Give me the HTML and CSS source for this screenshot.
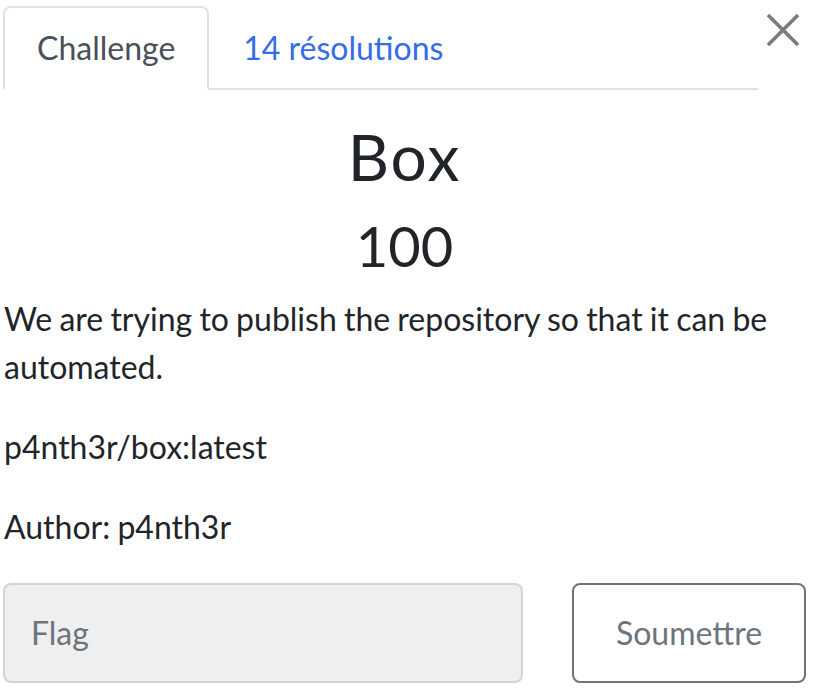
FILE: index.html
```html
<!DOCTYPE html>
<html lang="fr">
<head>
<meta charset="utf-8">
<title>Box</title>
<link rel="stylesheet" href="styles.css">
</head>
<body>
<div class="modal">
  <div class="header">
    <ul class="tabs">
      <li class="tab active">Challenge</li>
      <li class="tab link">14 résolutions</li>
    </ul>
    <button class="close" aria-label="Close">
      <svg width="34" height="34" viewBox="0 0 34 34"><path d="M2 2 L32 32 M32 2 L2 32" stroke="#7b7b7b" stroke-width="3.6" stroke-linecap="butt" fill="none"/></svg>
    </button>
  </div>
  <h2 class="name">Box</h2>
  <h3 class="value">100</h3>
  <div class="desc">
    <p>We are trying to publish the repository so that it can be automated.</p>
    <p>p4nth3r/box:latest</p>
    <p>Author: p4nth3r</p>
  </div>
  <form class="submit">
    <input class="flag" type="text" placeholder="Flag">
    <button type="button" class="btn">Soumettre</button>
  </form>
</div>
</body>
</html>
```
FILE: styles.css
```css
* { box-sizing: border-box; }
html, body { margin: 0; padding: 0; background: #fff; }
body {
  font-family: Lato, "Open Sans", sans-serif;
  color: #212529;
  font-size: 32px;
  line-height: 48px;
}
.modal {
  width: 818px;
  padding: 6px 12px 0 3px;
}
.header {
  display: flex;
  align-items: flex-start;
}
.tabs {
  list-style: none;
  margin: 0;
  padding: 0;
  display: flex;
  width: 755px;
  border-bottom: 2px solid #dee2e6;
}
.tab {
  padding: 16px 32px;
  border: 2px solid transparent;
  border-radius: 8px 8px 0 0;
  margin-bottom: -2px;
  line-height: 48px;
}
.tab.active {
  color: #495057;
  border-color: #dee2e6 #dee2e6 #fff;
  background: #fff;
}
.tab.link { color: #356ce9; }
.close {
  margin: 7px 0 0 8px;
  padding: 0;
  border: 0;
  background: none;
  width: 34px;
  height: 34px;
  display: flex;
}
.name {
  margin: 29px 0 16px;
  text-align: center;
  font-size: 64px;
  line-height: 1.2;
  font-weight: 400;
  letter-spacing: 2px;
}
.value {
  margin: 0 0 16px;
  text-align: center;
  font-size: 56px;
  line-height: 1.2;
  font-weight: 400;
}
.desc { padding-left: 1px; word-spacing: -1px; }
.desc p { margin: 0 0 32px; }
.submit {
  display: grid;
  grid-template-columns: 520px 234px;
  column-gap: 49px;
}
.flag {
  height: 100px;
  border: 2px solid #ced4da;
  border-radius: 8px;
  background: #efefef;
  padding: 0 26px;
  font: inherit;
  color: #495057;
}
.flag::placeholder { color: #6c757d; }
.btn {
  height: 100px;
  border: 2px solid #6c757d;
  border-radius: 8px;
  background: #fff;
  color: #6c757d;
  font: inherit;
}
```
